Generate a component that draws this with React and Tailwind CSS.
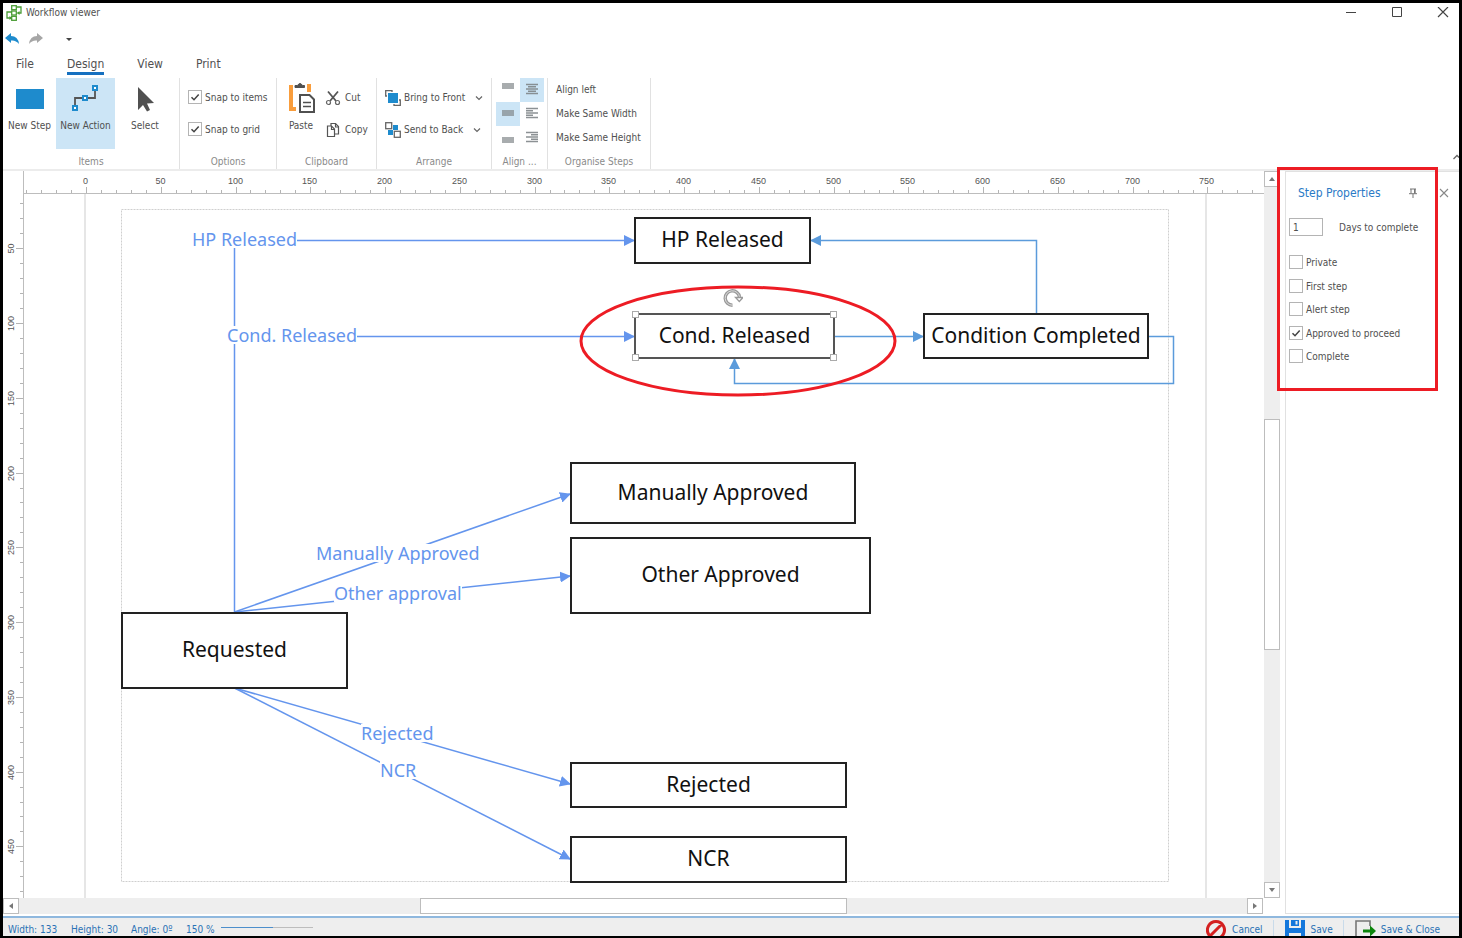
import React, { useState } from "react";

const BLUE = "#5b9bdb";
const INDIGO = "#6495ed";

const nodes = [
  { label: "HP Released", box: "left-[610px] top-[23px] w-[177px] h-[47px]" },
  { label: "Condition Completed", box: "left-[899px] top-[119px] w-[226px] h-[46px]" },
  { label: "Manually Approved", box: "left-[546px] top-[268px] w-[286px] h-[62px]" },
  { label: "Other Approved", box: "left-[546px] top-[343px] w-[301px] h-[77px]" },
  { label: "Requested", box: "left-[97px] top-[418px] w-[227px] h-[77px]" },
  { label: "Rejected", box: "left-[546px] top-[568px] w-[277px] h-[46px]" },
  { label: "NCR", box: "left-[546px] top-[642px] w-[277px] h-[47px]" },
];

const actions = [
  { label: "HP Released", place: "left-[168px] top-[36px]" },
  { label: "Cond. Released", place: "left-[203px] top-[132px]" },
  { label: "Manually Approved", place: "left-[292px] top-[350px]" },
  { label: "Other approval", place: "left-[310px] top-[390px]" },
  { label: "Rejected", place: "left-[337px] top-[530px]" },
  { label: "NCR", place: "left-[356px] top-[567px]" },
];

// pixels per ruler unit at 150 %
const UNIT = 1.4953;

const Check = ({ id, label, defaultChecked }) => {
  const [checked, setChecked] = useState(!!defaultChecked);
  return (
    <div className="flex h-[14px] items-center">
      <span className="relative flex">
        <input
          id={id}
          type="checkbox"
          checked={checked}
          onChange={(e) => setChecked(e.target.checked)}
          className="h-[14px] w-[14px] appearance-none border border-[#b4b4b4] bg-white"
        />
        {checked && (
          <svg viewBox="0 0 14 14" className="pointer-events-none absolute inset-0 h-[14px] w-[14px]">
            <path d="M3.5 7.2 6 9.7 10.7 4.4" fill="none" stroke="#444" strokeWidth="1.5" />
          </svg>
        )}
      </span>
      <label htmlFor={id} className="pt-[2px] pl-[3px]">
        {label}
      </label>
    </div>
  );
};

const Group = ({ title, className, children }) => (
  <section className={`flex shrink-0 flex-col border-r border-[#e1e1e1] ${className}`}>
    <div className="flex h-[76px]">{children}</div>
    <h2 className="pt-[2px] text-center text-[#8a8a8a]">{title}</h2>
  </section>
);

const TopRuler = () => (
  <svg className="h-[23px] min-w-0 flex-1 border-b border-l border-[#bdbdbd]">
    {Array.from({ length: 83 }, (_, i) => i - 4).map((n) => {
      const x = Math.round(62 + n * 10 * UNIT) + 0.5;
      const major = n % 5 === 0;
      return (
        <g key={n}>
          <line x1={x} x2={x} y1={major ? 16 : 19} y2="23" stroke="#b4b4b4" />
          {major && n >= 0 && (
            <text x={x - 1} y="13" textAnchor="middle" className="fill-[#555] font-['Liberation_Sans'] text-[9px]">
              {n * 10}
            </text>
          )}
        </g>
      );
    })}
  </svg>
);

const LeftRuler = () => (
  <svg className="h-full w-[21px] shrink-0 border-r border-[#bdbdbd]">
    {Array.from({ length: 47 }, (_, i) => i + 2).map((n) => {
      const y = Math.round(n * 10 * UNIT - 20.5) + 0.5;
      const major = n % 5 === 0;
      return (
        <g key={n}>
          <line x1={major ? 13 : 17} x2="21" y1={y} y2={y} stroke="#b4b4b4" />
          {major && (
            <text
              transform={`translate(11 ${y}) rotate(-90)`}
              textAnchor="middle"
              className="fill-[#555] font-['Liberation_Sans'] text-[9px]"
            >
              {n * 10}
            </text>
          )}
        </g>
      );
    })}
  </svg>
);

const ArrowButton = ({ label, path }) => (
  <button
    type="button"
    aria-label={label}
    className="flex h-4 w-4 shrink-0 items-center justify-center border border-[#bdbdbd] bg-white"
  >
    <svg viewBox="0 0 8 8" className="h-2 w-2">
      <path d={path} fill="#777" />
    </svg>
  </button>
);

const Diagram = () => (
  <div className="relative min-w-0 flex-1 overflow-hidden">
    {/* page edges, margins and connectors */}
    <svg className="absolute inset-0 h-full w-full">
      <defs>
        <marker id="indigo" markerUnits="userSpaceOnUse" markerWidth="11" markerHeight="11" refX="10" refY="5.5" orient="auto">
          <path d="M0 0 11 5.5 0 11Z" fill={INDIGO} />
        </marker>
        <marker id="blue" markerUnits="userSpaceOnUse" markerWidth="11" markerHeight="11" refX="10" refY="5.5" orient="auto">
          <path d="M0 0 11 5.5 0 11Z" fill={BLUE} />
        </marker>
      </defs>
      <path d="M61 0V704M1182 0V704" stroke="#e6e6e6" strokeWidth="2" />
      <rect x="97.5" y="15.5" width="1047" height="672" fill="none" stroke="#cfcfcf" strokeDasharray="2 1" />
      <g fill="none" stroke={INDIGO} strokeWidth="1.5">
        <path d="M210.5 418V46.5H610" markerEnd="url(#indigo)" />
        <path d="M210.5 142.5H610" markerEnd="url(#indigo)" />
        <path d="M210.5 418 546 300" markerEnd="url(#indigo)" />
        <path d="M210.5 418 546 382" markerEnd="url(#indigo)" />
        <path d="M210.5 494 546 590" markerEnd="url(#indigo)" />
        <path d="M210.5 494 546 665" markerEnd="url(#indigo)" />
      </g>
      <g fill="none" stroke={BLUE} strokeWidth="1.5">
        <path d="M1012.5 119V46.5H787" markerEnd="url(#blue)" />
        <path d="M811 142.5H899" markerEnd="url(#blue)" />
        <path d="M1125 142.5H1149.5V189.5H710.5V165" markerEnd="url(#blue)" />
      </g>
    </svg>

    {actions.map((a) => (
      <span
        key={a.label}
        className={`absolute bg-white font-['Noto_Sans',sans-serif] text-[18px] leading-[18px] text-[#6495ed] ${a.place}`}
      >
        {a.label}
      </span>
    ))}

    {nodes.map((n) => (
      <div
        key={n.label}
        className={`absolute flex items-center justify-center border-2 border-[#222] bg-white pb-[2px] font-['Noto_Sans',sans-serif] text-[21px] leading-none whitespace-nowrap text-[#111] ${n.box}`}
      >
        {n.label}
      </div>
    ))}

    {/* selected step with its handles */}
    <div className="absolute top-[119px] left-[610px] flex h-[46px] w-[201px] items-center justify-center border-2 border-[#555] bg-white pb-[2px] font-['Noto_Sans',sans-serif] text-[21px] leading-none whitespace-nowrap text-[#111]">
      Cond. Released
      <i className="absolute -top-1 -left-1 h-[7px] w-[7px] border border-[#aaa] bg-white" />
      <i className="absolute -top-1 -right-1 h-[7px] w-[7px] border border-[#aaa] bg-white" />
      <i className="absolute -bottom-1 -left-1 h-[7px] w-[7px] border border-[#aaa] bg-white" />
      <i className="absolute -right-1 -bottom-1 h-[7px] w-[7px] border border-[#aaa] bg-white" />
    </div>
    <svg viewBox="0 0 20 20" className="absolute top-[94px] left-[699px] h-5 w-5">
      <path d="M9.5 17.2A7.2 7.2 0 1 1 16.5 9" fill="none" stroke="#999" strokeWidth="3.4" />
      <path d="M9.5 17.2A7.2 7.2 0 1 1 16.5 9" fill="none" stroke="#ddd" strokeWidth="1" />
      <path d="M12.5 9.5H20L16.300 13.500Z" fill="#fff" stroke="#999" strokeWidth="1.3" />
    </svg>

    <svg viewBox="0 0 318 112" className="absolute top-[91px] left-[555px] h-[112px] w-[318px]">
      <ellipse cx="159" cy="56" rx="157" ry="54" fill="none" stroke="#ed1c24" strokeWidth="3" />
    </svg>
  </div>
);

const AlignIcon = ({ d }) => (
  <svg viewBox="0 0 24 24" className="h-6 w-6">
    <path d={d} stroke="#808588" strokeOpacity=".9" strokeWidth="1.6" fill="none" />
  </svg>
);

const alignments = [
  { name: "Align top", d: "M6 6H18M6 8H18M6 10H18" },
  { name: "Align centre", d: "M6 6.500H18M8 8.750H16M6 11H18M8 13.250H16M6 15.500H18", on: true },
  { name: "Align middle", d: "M6 9H18M6 11H18M6 13H18", on: true },
  { name: "Align left edge", d: "M6 6.500H18M6 8.750H13M6 11H18M6 13.250H13M6 15.500H18" },
  { name: "Align bottom", d: "M6 12H18M6 14H18M6 16H18" },
  { name: "Align right edge", d: "M6 6.500H18M11 8.750H18M6 11H18M11 13.250H18M6 15.500H18" },
];

const Chevron = () => (
  <svg viewBox="0 0 8 8" className="h-2 w-2">
    <path d="M1 2.5 4 5.5 7 2.5" fill="none" stroke="#666" strokeWidth="1.2" />
  </svg>
);

const Ribbon = () => (
  <div className="flex h-[94px] shrink-0 pt-[3px]">
    <Group title="Items" className="w-[177px]">
      <button type="button" className="flex h-[71px] w-[53px] flex-col items-center whitespace-nowrap">
        <svg viewBox="0 0 32 41" className="h-[41px] w-8">
          <rect x="2" y="11" width="28" height="20" fill="#1e8bcd" />
        </svg>
        New Step
      </button>
      <button type="button" className="flex h-[71px] w-[59px] flex-col items-center bg-[#cce5f6] whitespace-nowrap">
        <svg viewBox="0 0 32 41" className="h-[41px] w-8">
          <path d="M5 30V20H25V10" fill="none" stroke="#555" strokeWidth="1.8" />
          <g fill="#fff" stroke="#1e8bcd" strokeWidth="2">
            <rect x="3" y="28" width="4" height="4" />
            <rect x="13" y="18" width="4" height="4" />
            <rect x="23" y="8" width="4" height="4" />
          </g>
        </svg>
        New Action
      </button>
      <button type="button" className="flex h-[71px] w-[60px] flex-col items-center whitespace-nowrap">
        <svg viewBox="0 0 32 41" className="h-[41px] w-8">
          <path d="M9 9V32L14 27 18 33.500 21 32 18 25.500 25 25Z" fill="#505050" />
        </svg>
        Select
      </button>
    </Group>

    <Group title="Options" className="w-[97px]">
      <div className="flex flex-col gap-[18px] pt-3 pl-2 whitespace-nowrap">
        <Check id="snap-items" label="Snap to items" defaultChecked />
        <Check id="snap-grid" label="Snap to grid" defaultChecked />
      </div>
    </Group>

    <Group title="Clipboard" className="w-[100px]">
      <button type="button" className="flex h-[71px] w-[48px] flex-col items-center">
        <svg viewBox="0 0 32 41" className="h-[41px] w-8">
          <path d="M6 7V31H11" fill="none" stroke="#f99d3c" strokeWidth="4" />
          <path d="M24 6V14" stroke="#f99d3c" strokeWidth="4" />
          <path d="M10 9.500V7.500H12.500Q15 3.500 17.500 7.500H19.500V9.500Z" fill="#505050" stroke="#505050" />
          <path d="M15 17H24.500L29 21.500V34H15Z" fill="#fff" stroke="#505050" strokeWidth="2" />
          <path d="M18 24.500H26M18 28.500H26" stroke="#505050" strokeWidth="1.5" />
        </svg>
        Paste
      </button>
      <div className="flex flex-col gap-4 pt-3">
        <button type="button" className="flex h-4 items-center gap-1">
          <svg viewBox="0 0 16 16" className="h-4 w-4">
            <path d="M3 1.5 11 11M13 1.5 5 11" stroke="#555" strokeWidth="1.8" />
            <g fill="none" stroke="#666" strokeWidth="1.2">
              <circle cx="3.5" cy="12.5" r="2" />
              <circle cx="12.5" cy="12.5" r="2" />
            </g>
          </svg>
          Cut
        </button>
        <button type="button" className="flex h-4 items-center gap-1">
          <svg viewBox="0 0 16 16" className="h-4 w-4">
            <g fill="#fff" stroke="#555" strokeWidth="1.2">
              <path d="M6 1.5H10.500L13.500 4.500V12H6Z" />
              <path d="M2.500 4H6.500L9.500 7V14.500H2.500Z" />
              <path d="M6.500 4V7.500H9.500M10.500 1.500V5H13.500" fill="none" />
            </g>
          </svg>
          Copy
        </button>
      </div>
    </Group>

    <Group title="Arrange" className="w-[115px]">
      <div className="flex flex-col gap-4 pt-3 pl-2 whitespace-nowrap">
        <button type="button" className="flex h-4 items-center">
          <svg viewBox="0 0 16 16" className="mr-[3px] h-4 w-4">
            <path d="M2 6H.7V.7H7V2M14 10H15.300V15.300H9V14" fill="none" stroke="#666" strokeWidth="1.3" />
            <rect x="3" y="3" width="10" height="10" fill="#1e8bcd" />
          </svg>
          <span className="pr-[10px]">Bring to Front</span>
          <Chevron />
        </button>
        <button type="button" className="flex h-4 items-center">
          <svg viewBox="0 0 16 16" className="mr-[3px] h-4 w-4">
            <path d="M8 3H13V8H8ZM3 8H8V13H3Z" fill="#1e8bcd" />
            <g fill="#fff" stroke="#666" strokeWidth="1.3">
              <rect x=".7" y=".7" width="6" height="6" />
              <rect x="9.3" y="9.3" width="6" height="6" />
            </g>
          </svg>
          <span className="pr-[10px]">Send to Back</span>
          <Chevron />
        </button>
      </div>
    </Group>

    <Group title="Align ..." className="w-[56px]">
      <div className="grid h-[72px] grid-cols-2 pl-1">
        {alignments.map((a) => (
          <button key={a.name} type="button" aria-label={a.name} className={a.on ? "bg-[#cce5f6]" : ""}>
            <AlignIcon d={a.d} />
          </button>
        ))}
      </div>
    </Group>

    <Group title="Organise Steps" className="w-[103px]">
      <div className="flex flex-col items-start pl-2 whitespace-nowrap">
        <button type="button" className="h-6">Align left</button>
        <button type="button" className="h-6">Make Same Width</button>
        <button type="button" className="h-6">Make Same Height</button>
      </div>
    </Group>

    <button type="button" aria-label="Collapse ribbon" className="mb-2 ml-auto h-2 w-[6px] self-end">
      <svg viewBox="0 0 6 8" className="h-2 w-[6px]">
        <path d="M.5 6 4 2.5 6 4.500" fill="none" stroke="#666" strokeWidth="1.3" />
      </svg>
    </button>
  </div>
);

const StepProperties = () => (
  <aside className="relative mb-[2px] ml-[5px] w-[174px] shrink-0 border border-r-0 border-[#e1e1e1]">
    <header className="flex h-[42px] items-center pl-3">
      <h2 className="flex-1 text-[12px] text-[#2a7ac6]">Step Properties</h2>
      <button type="button" aria-label="Pin" className="mr-[21px]">
        <svg viewBox="0 0 10 10" className="h-[10px] w-[10px]">
          <path d="M2 1H8M3 1V5.500M6.500 1V5.500M7.200 1V5.500M1 5.700H9M5 6V10" fill="none" stroke="#777" />
        </svg>
      </button>
      <button type="button" aria-label="Close panel" className="mr-[10px]">
        <svg viewBox="0 0 10 10" className="h-[10px] w-[10px]">
          <path d="M1 1 9 9M9 1 1 9" stroke="#888" strokeWidth="1.1" />
        </svg>
      </button>
    </header>
    <div className="flex items-center pt-1 pl-[3px]">
      <input id="days" defaultValue="1" className="h-[18px] w-[34px] border border-[#b4b4b4] px-[3px]" />
      <label htmlFor="days" className="pt-[2px] pl-4">
        Days to complete
      </label>
    </div>
    <div className="mt-[19px] flex h-[108px] flex-col justify-between pl-[3px]">
      <Check id="private" label="Private" />
      <Check id="first" label="First step" />
      <Check id="alert" label="Alert step" />
      <Check id="approved" label="Approved to proceed" defaultChecked />
      <Check id="complete" label="Complete" />
    </div>
    <div className="pointer-events-none absolute -top-[5px] -left-[9px] h-[224px] w-[161px] border-3 border-[#ed1c24]" />
  </aside>
);

const App = () => {
  return (
    <div className="flex h-screen flex-col overflow-hidden border-3 border-b-2 border-black bg-white font-['DejaVu_Sans_Condensed','Noto_Sans',sans-serif] text-[10px] leading-[14px] text-[#505050]">
      <header className="flex h-[19px] shrink-0 items-center pl-[3px]">
        <svg viewBox="0 0 16 16" className="mr-1 h-4 w-4">
          <g fill="#fff" stroke="#4a9c35" strokeWidth="1.3">
            <path d="M10 2H15V8H11.500M6 7H1V13H5" fill="none" />
            <rect x="5.7" y=".7" width="4.6" height="4" />
            <rect x="5.7" y="6" width="4.6" height="4" />
            <rect x="5.7" y="11.3" width="4.6" height="4" />
          </g>
          <path d="M13.500 6V10L11 8ZM3.500 11V15L6 13Z" fill="#4a9c35" />
        </svg>
        <h1 className="flex-1">Workflow viewer</h1>
        <div className="flex items-center gap-[34px] pr-[10px]">
          <button type="button" aria-label="Minimize">
            <svg viewBox="0 0 12 12" className="h-3 w-3">
              <path d="M1 5.5H11" stroke="#444" />
            </svg>
          </button>
          <button type="button" aria-label="Maximize">
            <svg viewBox="0 0 12 12" className="h-3 w-3">
              <path d="M1.500 .5H10.500V9.500H1.500Z" fill="none" stroke="#444" />
            </svg>
          </button>
          <button type="button" aria-label="Close">
            <svg viewBox="0 0 12 12" className="h-3 w-3">
              <path d="M1 0 11 10M11 0 1 10" stroke="#444" strokeWidth="1.2" />
            </svg>
          </button>
        </div>
      </header>

      <div className="flex h-[35px] shrink-0 items-center pb-[2px] pl-[2px]">
        <button type="button" aria-label="Undo">
          <svg viewBox="0 0 14 12" className="h-3 w-[14px]">
            <path d="M0 5 6 0V3Q13 3 14 11Q11 7 6 7.500V10Z" fill="#1e8bcd" />
          </svg>
        </button>
        <button type="button" aria-label="Redo" className="ml-[10px]">
          <svg viewBox="0 0 14 12" className="h-3 w-[14px]">
            <path d="M14 5 8 0V3Q1 3 0 11Q3 7 8 7.500V10Z" fill="#a6a6a6" />
          </svg>
        </button>
        <button type="button" aria-label="Customize toolbar" className="ml-[22px]">
          <svg viewBox="0 0 8 8" className="h-2 w-2">
            <path d="M1 3H7L4 6Z" fill="#444" />
          </svg>
        </button>
      </div>

      <nav className="flex h-[18px] shrink-0 gap-[33px] pl-[13px] text-[12px] leading-[15px]">
        <a href="#file">File</a>
        <a href="#design" className="border-b-3 border-[#1570c0]">Design</a>
        <a href="#view">View</a>
        <a href="#print">Print</a>
      </nav>

      <Ribbon />

      <main className="flex min-h-0 flex-1 border-t-2 border-[#ececec]">
        <div className="mb-[2px] flex min-w-0 flex-1 flex-col">
          <div className="flex min-h-0 flex-1">
            <div className="flex min-w-0 flex-1 flex-col">
              <div className="flex pl-[20px]">
                <TopRuler />
              </div>
              <div className="flex min-h-0 flex-1">
                <LeftRuler />
                <Diagram />
              </div>
            </div>
            <div className="flex w-4 flex-col bg-[#eee]">
              <ArrowButton label="Scroll up" path="M1 6H7L4 2Z" />
              <div className="flex-1" />
              <div className="h-[231px] border border-[#bdbdbd] bg-white" />
              <div className="flex-1" />
              <ArrowButton label="Scroll down" path="M1 2H7L4 6Z" />
            </div>
          </div>
          <div className="mr-[17px] flex h-4 bg-[#eee]">
            <ArrowButton label="Scroll left" path="M6 1V7L2 4Z" />
            <div className="flex-1" />
            <div className="w-[427px] border border-[#bdbdbd] bg-white" />
            <div className="flex-1" />
            <ArrowButton label="Scroll right" path="M2 1V7L6 4Z" />
          </div>
        </div>
        <StepProperties />
      </main>

      <footer className="flex h-[20px] shrink-0 items-center overflow-hidden border-t-2 border-[#8fb8de] bg-[#eee] pt-[6px] pl-[5px] text-[#2a72b5]">
        <span className="w-[63px]">Width: 133</span>
        <span className="w-[60px]">Height: 30</span>
        <span className="w-[55px]">Angle: 0º</span>
        <label htmlFor="zoom" className="pr-[6px]">150 %</label>
        <input
          id="zoom"
          type="range"
          defaultValue="57"
          className="mb-[5px] h-px w-[92px] appearance-none bg-linear-to-r from-[#4d8fcc] from-57% to-[#bdbdbd] to-57% [&::-webkit-slider-thumb]:appearance-none [&::-webkit-slider-thumb]:opacity-0"
        />
        <div className="ml-auto flex items-center">
          <button type="button" className="flex h-5 items-center gap-[6px] border-r border-[#c9dbea] pr-[10px]">
            <svg viewBox="0 0 20 20" className="h-5 w-5">
              <path d="M4.500 15.500 15.500 4.500M10 1.500A8.500 8.500 0 1 1 9.900 1.500Z" fill="none" stroke="#d42020" strokeWidth="3" />
            </svg>
            Cancel
          </button>
          <button type="button" className="ml-[11px] flex h-5 items-center gap-[6px] border-r border-[#c9dbea] pr-[10px]">
            <svg viewBox="0 0 20 20" className="h-5 w-5">
              <path d="M0 0H20V20H0Z" fill="#1578dc" />
              <path d="M4 0H16V8H4ZM4 13H16V20H4Z" fill="#eee" />
              <path d="M6 0H14V6H6Z" fill="#1578dc" />
              <path d="M10.500 1H12.500V4.500H10.500Z" fill="#eee" />
            </svg>
            Save
          </button>
          <button type="button" className="ml-[11px] flex h-5 items-center gap-1 pr-[19px]">
            <svg viewBox="0 0 22 20" className="h-5 w-[22px]">
              <path d="M15 6V1H1V19H15V16" fill="none" stroke="#777" strokeWidth="1.6" />
              <path d="M8 11H19" stroke="#0c850c" strokeWidth="3" />
              <path d="M15 5.500 21 11 15 16.500Z" fill="#0c850c" />
            </svg>
            Save &amp; Close
          </button>
        </div>
      </footer>
    </div>
  );
};

export default App;
